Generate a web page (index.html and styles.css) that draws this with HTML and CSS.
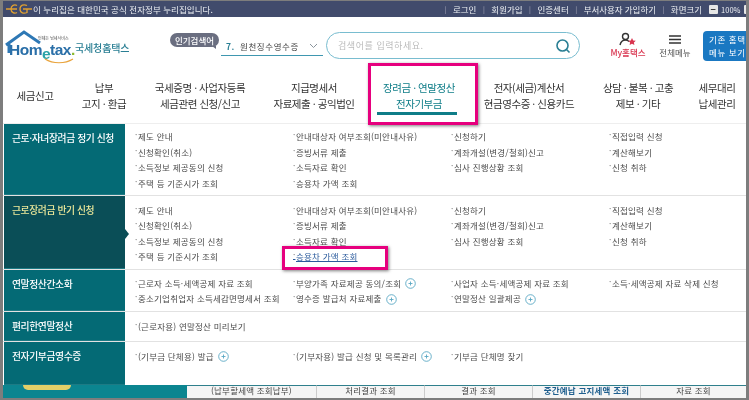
FILE: index.html
```html
<!DOCTYPE html>
<html lang="ko">
<head>
<meta charset="utf-8">
<title>Hometax</title>
<link rel="stylesheet" href="styles.css">
</head>
<body>
<div class="page">
  <div class="topbar">
    <div class="gov">
      <svg class="eg" width="26" height="12" viewBox="0 0 26 12"><path d="M0 6h7M11 2.500C8.500 1 5 2.500 5 6s3.500 5 6 3.500M6 6h5M21 2.500C18 1 14 2 14 6s4 5 7 3.500V6h-4M21 6h5" fill="none" stroke="#e0a030" stroke-width="1.300"/></svg>
      <span>이 누리집은 대한민국 공식 전자정부 누리집입니다.</span>
    </div>
    <div class="util">
      <span class="sep">|</span><span>로그인</span><span class="sep">|</span><span>회원가입</span><span class="sep">|</span><span>인증센터</span><span class="sep">|</span><span class="tight">부서사용자 가입하기</span><span class="sep">|</span><span>화면크기</span>
      <span class="zoombtn">−</span><span class="pct">100%</span><span class="zoombtn blank"></span>
    </div>
  </div>

  <header class="head">
    <div class="logo">
      <svg class="roof" width="36" height="24" viewBox="0 0 36 24"><path d="M1 15L19 2l16 11M4 14v9" fill="none" stroke="#2e78b5" stroke-width="3"/></svg>
      <span class="tiny">언제든 납세서비스</span>
      <span class="hometax">Hom<span class="e">e</span>tax<span class="dot">.</span></span>
      <svg class="smile" width="30" height="6" viewBox="0 0 30 6"><path d="M1 1c8 5 20 5 28 0" fill="none" stroke="#e9a33b" stroke-width="1.200"/></svg>
      <span class="logoname">국세청홈택스</span>
    </div>
    <div class="popular">
      <span class="poptag">인기검색어</span>
      <div class="popsel"><b>7.</b><span>원천징수영수증</span><svg width="9" height="6" viewBox="0 0 9 6"><path d="M1 1l3.500 3.500L8 1" fill="none" stroke="#8a949c" stroke-width="1"/></svg></div>
    </div>
    <div class="search">
      <span>검색어를 입력하세요.</span>
      <svg width="16" height="16" viewBox="0 0 16 16"><circle cx="7.500" cy="7.500" r="5.500" fill="none" stroke="#2a7f94" stroke-width="1.600"/><path d="M11.500 11.500l3 3" stroke="#2a7f94" stroke-width="1.600"/></svg>
    </div>
    <div class="tool my">
      <svg width="18" height="15" viewBox="0 0 18 15"><circle cx="6.500" cy="4.500" r="3" fill="none" stroke="#333" stroke-width="1.400"/><path d="M1 13c1-4 3-5 5.500-5 1.500 0 2.500.4 3.500 1.500" fill="none" stroke="#333" stroke-width="1.400"/><path d="M13 6l1.200 2.400 2.600.3-1.900 1.800.5 2.500-2.400-1.200-2.400 1.200.5-2.500-1.900-1.800 2.600-.3z" fill="#d9344f"/></svg>
      <span>My홈택스</span>
    </div>
    <div class="tool all">
      <svg width="14" height="9" viewBox="0 0 14 9"><path d="M1 1h12M1 4.500h12M1 8h12" stroke="#333" stroke-width="1.300"/></svg>
      <span>전체메뉴</span>
    </div>
    <div class="oldbtn">기존 홈택스<br>메뉴 보기</div>
  </header>

  <nav class="nav">
    <a>세금신고</a>
    <a>납부<br>고지 · 환급</a>
    <a>국세증명 · 사업자등록<br>세금관련 신청/신고</a>
    <a>지급명세서<br>자료제출 · 공익법인</a>
    <a class="on">장려금 · 연말정산<br>전자기부금</a>
    <a>전자(세금)계산서<br>현금영수증 · 신용카드</a>
    <a>상담 · 불복 · 고충<br>제보 · 기타</a>
    <a>세무대리<br>납세관리</a>
  </nav>

  <div class="menu">
    <section class="row r1">
      <h3>근로·자녀장려금 정기 신청</h3>
      <div class="cols">
        <ul><li>제도 안내</li><li>신청확인(취소)</li><li>소득정보 제공동의 신청</li><li>주택 등 기준시가 조회</li></ul>
        <ul><li>안내대상자 여부조회(미안내사유)</li><li>증빙서류 제출</li><li>소득자료 확인</li><li>승용차 가액 조회</li></ul>
        <ul><li>신청하기</li><li>계좌개설(변경/철회)신고</li><li>심사 진행상황 조회</li></ul>
        <ul><li>직접입력 신청</li><li>계산해보기</li><li>신청 취하</li></ul>
      </div>
    </section>
    <section class="row r2 active">
      <h3>근로장려금 반기 신청</h3>
      <div class="cols">
        <ul><li>제도 안내</li><li>신청확인(취소)</li><li>소득정보 제공동의 신청</li><li>주택 등 기준시가 조회</li></ul>
        <ul><li>안내대상자 여부조회(미안내사유)</li><li>증빙서류 제출</li><li>소득자료 확인</li><li class="link">승용차 가액 조회</li></ul>
        <ul><li>신청하기</li><li>계좌개설(변경/철회)신고</li><li>심사 진행상황 조회</li></ul>
        <ul><li>직접입력 신청</li><li>계산해보기</li><li>신청 취하</li></ul>
      </div>
    </section>
    <section class="row r3">
      <h3>연말정산간소화</h3>
      <div class="cols">
        <ul><li>근로자 소득·세액공제 자료 조회</li><li>중소기업취업자 소득세감면명세서 조회</li></ul>
        <ul><li>부양가족 자료제공 동의/조회<svg class="plus" viewBox="0 0 11 11"><circle cx="5.500" cy="5.500" r="4.800"/><path d="M3.500 5.500h4M5.500 3.500v4"/></svg></li><li>영수증 발급처 자료제출<svg class="plus" viewBox="0 0 11 11"><circle cx="5.500" cy="5.500" r="4.800"/><path d="M3.500 5.500h4M5.500 3.500v4"/></svg></li></ul>
        <ul><li>사업자 소득·세액공제 자료 조회</li><li>연말정산 일괄제공<svg class="plus" viewBox="0 0 11 11"><circle cx="5.500" cy="5.500" r="4.800"/><path d="M3.500 5.500h4M5.500 3.500v4"/></svg></li></ul>
        <ul><li>소득·세액공제 자료 삭제 신청</li></ul>
      </div>
    </section>
    <section class="row r4">
      <h3>편리한연말정산</h3>
      <div class="cols">
        <ul class="wide"><li>(근로자용) 연말정산 미리보기</li></ul>
      </div>
    </section>
    <section class="row r5">
      <h3>전자기부금영수증</h3>
      <div class="cols">
        <ul><li>(기부금 단체용) 발급<svg class="plus" viewBox="0 0 11 11"><circle cx="5.500" cy="5.500" r="4.800"/><path d="M3.500 5.500h4M5.500 3.500v4"/></svg></li></ul>
        <ul><li>(기부자용) 발급 신청 및 목록관리<svg class="plus" viewBox="0 0 11 11"><circle cx="5.500" cy="5.500" r="4.800"/><path d="M3.500 5.500h4M5.500 3.500v4"/></svg></li></ul>
        <ul><li>기부금 단체명 찾기</li></ul>
      </div>
    </section>
  </div>

  <div class="strip">
    <div class="stripleft"><span class="pill"></span></div>
    <div class="tab first">(납부할세액 조회납부)</div>
    <div class="tab">처리결과 조회</div>
    <div class="tab">결과 조회</div>
    <div class="tab cur">중간예납 고지세액 조회</div>
    <div class="tab">자료 조회</div>
  </div>

  <div class="mark mark-nav"></div>
  <div class="mark mark-link"></div>
</div>
</body>
</html>
```
FILE: styles.css
```css
* { box-sizing: border-box; }
html, body { margin: 0; height: 100%; overflow: hidden; background: #7d7d7d; }
body { padding: 1px 3px 2px 3px; font-family: "Noto Sans CJK KR", "Noto Sans", sans-serif; color: #333; }
.page { position: relative; width: 743px; height: 397px; background: #fff; overflow: hidden; display: flex; flex-direction: column; filter: blur(0.45px); }

.topbar { flex: none; height: 16px; background: #414b6c; color: #eef0f4; font-size: 8.500px; display: flex; justify-content: space-between; align-items: center; padding-left: 3px; white-space: nowrap; }
.gov { display: flex; align-items: center; gap: 1px; }
.gov span { letter-spacing: .05px; }
.util { display: flex; align-items: center; gap: 6.500px; margin-right: -7px; }
.util .sep { color: #aab; font-size: 7px; }
.util .tight { letter-spacing: -.05px; }
.zoombtn { width: 9px; height: 9px; background: #e6e6e6; color: #333; border-radius: 1px; font-size: 9px; line-height: 9px; text-align: center; font-weight: 700; }
.pct { font-size: 7.500px; margin-left: -3px; margin-right: -3px; }

.head { flex: none; height: 45px; display: flex; align-items: flex-start; position: relative; }
.logo { position: relative; width: 165px; height: 45px; flex: none; }
.roof { position: absolute; left: 2px; top: 13px; }
.tiny { position: absolute; left: 35px; top: 18px; font-size: 4px; color: #555; white-space: nowrap; }
.hometax { position: absolute; left: 6px; top: 24px; font: 700 15.500px/18px "Liberation Sans", sans-serif; color: #2a6fa8; letter-spacing: -.5px; }
.hometax .e { position: relative; top: 4px; color: #2aa3a8; }
.hometax .dot { color: #8ab92d; }
.smile { position: absolute; left: 41px; top: 41px; }
.logoname { position: absolute; left: 72px; top: 23px; font-size: 10px; line-height: 15px; font-weight: 500; color: #2a7f94; letter-spacing: -.15px; white-space: nowrap; }

.popular { width: 157px; flex: none; height: 45px; position: relative; display: flex; }
.poptag { position: absolute; left: 2px; top: 16px; background: #6a6e80; color: #fff; font-size: 8.500px; line-height: 14px; height: 14px; width: 49px; text-align: center; border-radius: 7px; font-weight: 500; }
.poptag::after { content: ""; position: absolute; right: 3px; bottom: -2px; border-left: 4px solid transparent; border-top: 3px solid #6a6e80; }
.popsel { position: absolute; left: 53px; top: 19px; width: 102px; height: 20px; border-bottom: 1px solid #3f97b0; display: flex; align-items: center; font-size: 8.500px; padding-left: 5px; color: #444; letter-spacing: .6px; }
.popsel b { color: #2a7f94; margin-right: 5px; }
.popsel svg { margin-left: 10px; }

.search { flex: none; width: 254px; height: 27px; margin-top: 15px; border: 1.500px solid #79bdd0; border-radius: 14px; display: flex; align-items: center; justify-content: space-between; padding: 0 8px 0 11px; color: #bbb; font-size: 9px; letter-spacing: .55px; margin-left: 1px; }

.tool { position: absolute; display: flex; flex-direction: column; align-items: center; top: 15px; white-space: nowrap; font-size: 8.500px; line-height: 11px; }
.my { left: 605px; width: 40px; color: #d9344f; font-weight: 500; gap: 0; }
.all { left: 654px; width: 36px; color: #555; gap: 3px; top: 18px; }
.oldbtn { position: absolute; left: 700px; top: 14px; width: 56px; height: 30px; background: #1a78c2; color: #fff; border-radius: 4px; font-size: 8.500px; line-height: 13px; padding: 2px 0 0 6px; letter-spacing: .6px; white-space: nowrap; }

.nav { flex: none; height: 62px; display: grid; grid-template-columns: 64px 74px 118px 110px 100px 120px 98px 60px; border-bottom: 1px solid #eee; }
.nav a { display: flex; align-items: center; justify-content: center; text-align: center; font-size: 10.500px; line-height: 15.500px; color: #333; letter-spacing: -.45px; white-space: nowrap; padding-top: 6px; position: relative; }
.nav a.on { color: #0f7d88; }
.nav a.on::after { content: ""; position: absolute; left: 8px; right: 12px; bottom: 8px; height: 3px; background: #0f7d88; }

.menu { flex: none; height: 261px; display: flex; flex-direction: column; }
.row { display: flex; border-bottom: 1px solid #e2e2e2; position: relative; flex: none; }
.r1 { height: 72px; }
.r2 { height: 74px; }
.r3 { height: 42px; }
.r4 { height: 30px; }
.r5 { height: 43px; border-bottom: none; }
.row h3 { margin: 0 0 0 1px; flex: none; width: 121px; background: #046a75; color: #fff; font-size: 9.800px; line-height: 15px; font-weight: 500; padding: 6.500px 0 0 8px; letter-spacing: -.4px; white-space: nowrap; border-bottom: 1px solid #1d7b85; }
.active h3 { background: #0a4e57; color: #ece89a; }
.active h3::after { content: ""; position: absolute; left: 122px; top: 33px; border-left: 4px solid #0a4e57; border-top: 5px solid transparent; border-bottom: 5px solid transparent; }
.cols { flex: 1; display: grid; grid-template-columns: repeat(4, 158px); padding-left: 10px; padding-top: 7px; }
.r1 .cols { padding-top: 5.300px; }
.r3 .cols { padding-top: 6px; }
.cols ul { list-style: none; margin: 0; padding: 0; }
.cols ul.wide { grid-column: span 4; }
.cols li { font-size: 8.500px; line-height: 15.400px; color: #4a4a4a; white-space: nowrap; letter-spacing: .22px; display: flex; align-items: center; }
.cols li::before { content: "·"; width: 3px; color: #666; position: relative; top: -2px; font-size: 8px; }
.cols li.link { color: #2a5a9c; text-decoration: underline; }
.plus { width: 11px; height: 11px; margin-left: 4px; fill: none; stroke: #5aa8c4; stroke-width: .9; }

.strip { flex: none; height: 13px; display: grid; grid-template-columns: 184px 129px 108px 108px 108px 106px; font-size: 8.500px; line-height: 8px; }
.stripleft { background: #0b8590; position: relative; }
.pill { position: absolute; left: 20px; top: 0; width: 48px; height: 5px; background: #e3cf68; border-radius: 0 0 10px 10px; }
.tab { text-align: center; border-left: 1px solid #ccc; background: #f5f5f5; color: #444; border-top: 1px solid #2f7f8c; white-space: nowrap; letter-spacing: .2px; overflow: hidden; }
.tab.first { border-left: none; }
.tab.cur { color: #1f5f8f; font-weight: 700; }

.mark { position: absolute; border: 3px solid #e6007e; box-shadow: 1px 1px 3px rgba(0,0,0,.5); pointer-events: none; }
.mark-nav { left: 365px; top: 62px; width: 110px; height: 62px; }
.mark-link { left: 279px; top: 245px; width: 106px; height: 24px; }
```
